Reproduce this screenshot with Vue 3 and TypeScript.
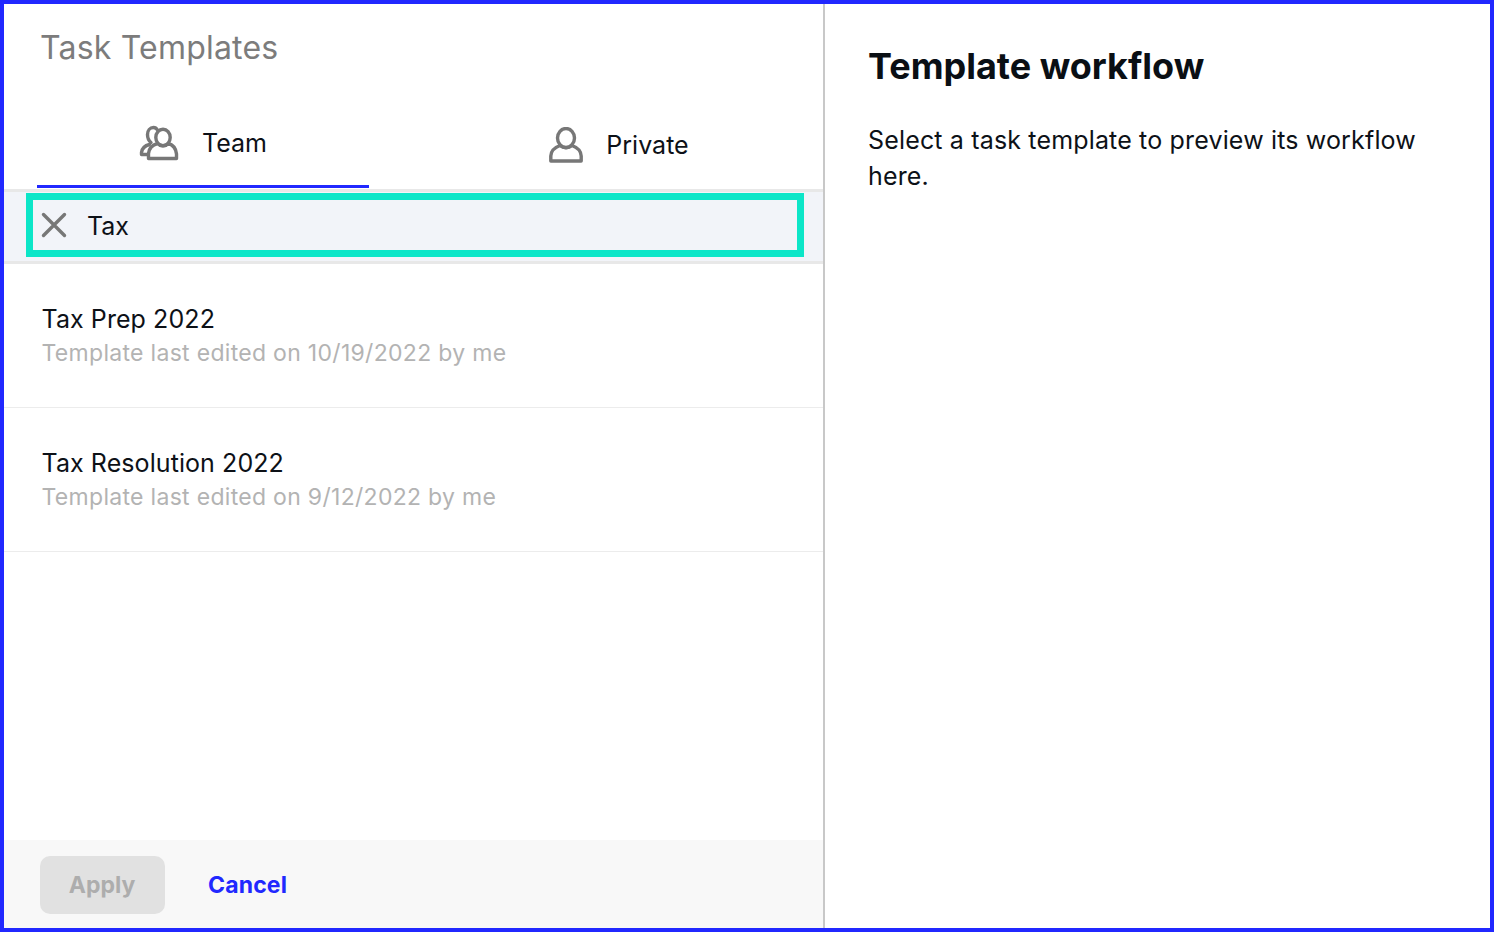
<script setup lang="ts">
interface Template { name: string; meta: string }
const templates: Template[] = [
  { name: 'Tax Prep 2022', meta: 'Template last edited on 10/19/2022 by me' },
  { name: 'Tax Resolution 2022', meta: 'Template last edited on 9/12/2022 by me' },
]
</script>

<template>
  <div class="frame">
    <section class="left">
      <h1 class="title">Task Templates</h1>
      <div class="tabs">
        <div class="tab tab-team">
          <svg class="ico" width="40" height="36" viewBox="0 0 40 36" fill="none" stroke="#777" stroke-width="3.4" stroke-linejoin="round" stroke-linecap="round">
            <path d="M10.5 19.5C6.5 20.5 3 23.5 2.5 27.5V29.5H9" />
            <path d="M18.5 5C17.5 3.3 16 2.5 14.5 2.5C11 2.5 8.5 5.5 8.5 9.5C8.5 12.5 9.5 15.5 12 17.5" />
            <ellipse cx="24" cy="12.5" rx="7.2" ry="8.2" />
            <path d="M18.5 18.5C13 20 10 24 9.5 28.5V33.5H37.5V29C37 24 34.5 20 29.5 18.5C26.5 21.5 21.5 21.5 18.5 18.5Z" />
          </svg>
          <span class="tab-label">Team</span>
        </div>
        <div class="tab tab-private">
          <svg class="ico" width="34" height="36" viewBox="0 0 34 36" fill="none" stroke="#777" stroke-width="3.4" stroke-linejoin="round">
            <ellipse cx="17" cy="11" rx="8.5" ry="9.5" />
            <path d="M11 18.5C5.5 20.5 2 24.5 1.8 29V34H32.2V29C32 24.5 28.5 20.5 23 18.5C19.5 21.5 14.5 21.5 11 18.5Z" />
          </svg>
          <span class="tab-label">Private</span>
        </div>
      </div>
      <div class="search-band">
        <div class="search">
          <svg class="close" width="26" height="26" viewBox="0 0 26 26" stroke="#777" stroke-width="3.4" stroke-linecap="round">
            <path d="M2.5 2.5L23.5 23.5M23.5 2.5L2.5 23.5" />
          </svg>
          <span class="query">Tax</span>
        </div>
      </div>
      <ul class="list">
        <li v-for="t in templates" :key="t.name" class="row">
          <div class="row-name">{{ t.name }}</div>
          <div class="row-meta">{{ t.meta }}</div>
        </li>
      </ul>
      <footer class="foot">
        <button class="apply" type="button">Apply</button>
        <button class="cancel" type="button">Cancel</button>
      </footer>
    </section>
    <aside class="right">
      <h2 class="wf-title">Template workflow</h2>
      <p class="wf-text">Select a task template to preview its workflow here.</p>
    </aside>
  </div>
</template>

<style scoped>
.frame {
  box-sizing: border-box;
  width: 1494px;
  height: 932px;
  border: 4px solid #2128ff;
  display: flex;
  background: #fff;
  font-family: Inter, "Liberation Sans", sans-serif;
  overflow: hidden;
}
.left {
  box-sizing: border-box;
  width: 821px;
  height: 100%;
  border-right: 2px solid #c8c8c8;
  display: flex;
  flex-direction: column;
}
.title {
  margin: 0;
  height: 92px;
  padding: 24px 0 0 36px;
  box-sizing: border-box;
  font-size: 32px;
  line-height: 40px;
  font-weight: 400;
  letter-spacing: 0.2px;
  color: #7c7c7c;
}
.tabs {
  display: flex;
  height: 92px;
  box-sizing: border-box;
  padding-left: 33px;
}
.tab {
  box-sizing: border-box;
  display: flex;
  align-items: center;
  justify-content: center;
  gap: 23px;
}
.tab-team {
  width: 332px;
  height: 92px;
  border-bottom: 3px solid #2128ff;
  padding: 5px 0 0;
}
.tab-private {
  flex: 1;
  padding: 6px 0 0 46px;
}
.tab-label {
  font-size: 25px;
  line-height: 32px;
  color: #0d1117;
}
.search-band {
  box-sizing: border-box;
  height: 75px;
  margin-top: 1px;
  background: #f2f4f9;
  border-top: 3px solid #e8e8e8;
  border-bottom: 3px solid #e8e8e8;
  padding: 1px 19px 0 22px;
}
.search {
  box-sizing: border-box;
  height: 64px;
  border: 7px solid #0ce6c8;
  display: flex;
  align-items: center;
  padding-left: 8px;
  gap: 20px;
}
.query {
  margin-top: 2px;
  font-size: 25px;
  color: #0d1117;
}
.list {
  list-style: none;
  margin: 0;
  padding: 0;
  flex: 1;
}
.row {
  box-sizing: border-box;
  height: 144px;
  padding: 38px 0 0 37.5px;
  border-bottom: 1px solid #ececec;
}
.row-name {
  font-size: 25px;
  line-height: 34px;
  letter-spacing: 0.08px;
  color: #0d1117;
}
.row-meta {
  font-size: 23px;
  line-height: 34px;
  letter-spacing: 0.3px;
  color: #b3b3b3;
}
.foot {
  box-sizing: border-box;
  height: 88px;
  background: #f8f8f8;
  display: flex;
  align-items: center;
  padding: 2px 0 0 36px;
  gap: 43px;
}
.apply {
  width: 125px;
  height: 58px;
  border: 0;
  border-radius: 10px;
  background: #e1e1e1;
  color: #adadad;
  font: 700 23px Inter, sans-serif;
  padding: 0 1px 0 0;
}
.cancel {
  border: 0;
  background: none;
  color: #2128ff;
  font: 700 23px Inter, sans-serif;
  letter-spacing: 0.15px;
  padding: 0;
}
.right {
  flex: 1;
  padding: 38px 40px 0 43px;
}
.wf-title {
  margin: 0;
  font-size: 36px;
  line-height: 48px;
  font-weight: 700;
  color: #0a0f14;
}
.wf-text {
  margin: 32px 0 0;
  font-size: 25px;
  line-height: 36px;
  letter-spacing: 0.16px;
  color: #0d1117;
}
</style>
